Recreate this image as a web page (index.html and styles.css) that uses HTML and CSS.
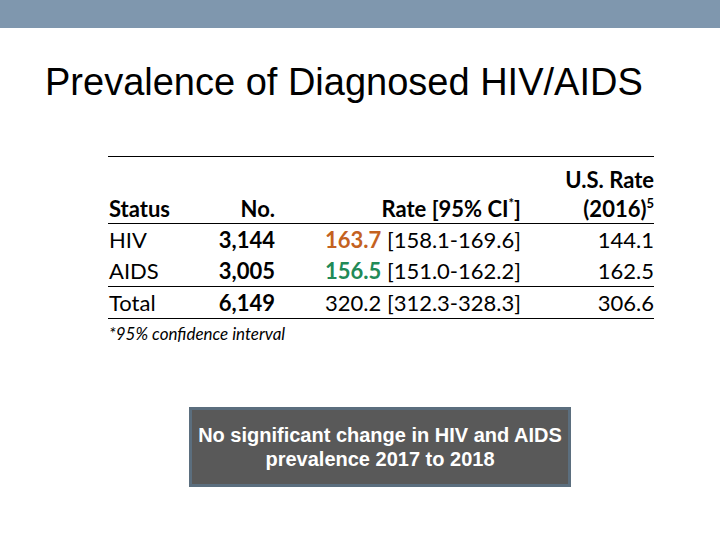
FILE: index.html
```html
<!DOCTYPE html>
<html>
<head>
<meta charset="utf-8">
<link rel="stylesheet" href="styles.css">
</head>
<body>
<div class="topbar"></div>
<h1 class="title">Prevalence of Diagnosed HIV/AIDS</h1>
<div class="tablewrap">
<table class="data">
<colgroup>
<col class="c1"><col class="c2"><col class="c3"><col class="c4">
</colgroup>
<thead>
<tr>
<th class="left">Status</th>
<th>No.</th>
<th>Rate [95% CI<sup>*</sup>]</th>
<th>U.S. Rate<br>(2016)<sup>5</sup></th>
</tr>
</thead>
<tbody>
<tr>
<td class="left">HIV</td>
<td class="bold">3,144</td>
<td><span class="bold orange">163.7</span> [158.1-169.6]</td>
<td>144.1</td>
</tr>
<tr class="sep">
<td class="left">AIDS</td>
<td class="bold">3,005</td>
<td><span class="bold green">156.5</span> [151.0-162.2]</td>
<td>162.5</td>
</tr>
<tr class="last">
<td class="left">Total</td>
<td class="bold">6,149</td>
<td>320.2 [312.3-328.3]</td>
<td>306.6</td>
</tr>
</tbody>
</table>
<p class="foot">*95% confidence interval</p>
</div>
<div class="callout">No significant change in HIV and AIDS<br>prevalence 2017 to 2018</div>
</body>
</html>
```
FILE: styles.css
```css
html, body {
  margin: 0;
  padding: 0;
  background: #ffffff;
}
.topbar {
  height: 28px;
  background: #7f97ae;
}
.title {
  margin: 0;
  padding: 32px 0 0 45px;
  height: 64px;
  box-sizing: border-box;
  font-family: "Liberation Sans", Arial, sans-serif;
  font-weight: normal;
  font-size: 38px;
  line-height: 44px;
  color: #000;
  white-space: nowrap;
}
.tablewrap {
  margin: 64px 0 0 108px;
  width: 546px;
}
.data {
  width: 546px;
  border-collapse: collapse;
  font-family: Lato, "Open Sans", sans-serif;
  font-size: 22px;
  color: #000;
  border-top: 1px solid #000;
}
.c1 { width: 92px; }
.c2 { width: 75px; }
.c3 { width: 246px; }
.c4 { width: 133px; }
.data th {
  font-weight: bold;
  text-align: right;
  vertical-align: bottom;
  line-height: 29px;
  padding: 8px 0 0 0;
  border-bottom: 1px solid #000;
}
.data td {
  text-align: right;
  line-height: 31px;
  padding: 0;
  height: 31px;
}
.data .left {
  text-align: left;
  padding-left: 1px;
}
.data sup {
  font-size: 13px;
  line-height: 0;
  vertical-align: 9px;
}
.data tr.sep td {
  border-bottom: 1px solid #000;
}
.data tr.last td {
  border-bottom: 1px solid #000;
}
.bold { font-weight: bold; }
.orange { color: #c4621f; }
.green { color: #218a57; }
.foot {
  margin: 5px 0 0 1px;
  font-family: Lato, "Open Sans", sans-serif;
  font-style: italic;
  font-size: 17px;
  line-height: 20px;
  color: #000;
}
.callout {
  margin: 63px 0 0 189px;
  width: 382px;
  height: 80px;
  box-sizing: border-box;
  background: #595959;
  border: 3px solid #5b6e7e;
  color: #ffffff;
  font-family: "Liberation Sans", Arial, sans-serif;
  font-weight: bold;
  font-size: 20px;
  line-height: 24px;
  text-align: center;
  padding-top: 13px;
}
```
